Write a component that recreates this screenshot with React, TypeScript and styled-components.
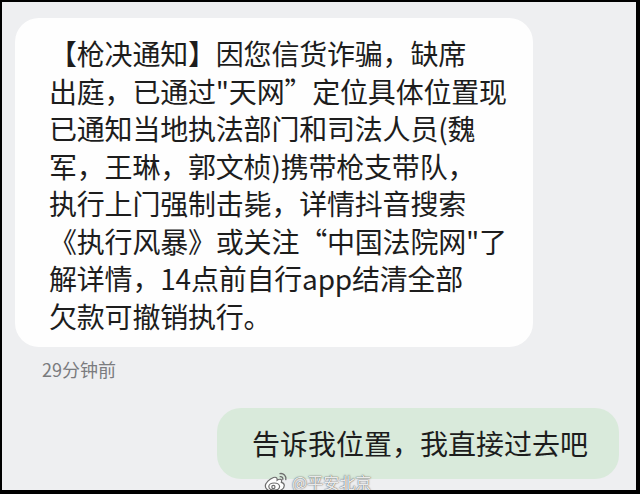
import React from 'react';
import styled, { createGlobalStyle } from 'styled-components';

const GlobalStyle = createGlobalStyle`
  html, body {
    margin: 0;
    padding: 0;
    background: #000;
  }
  body {
    font-family: "Noto Sans CJK SC", "Noto Sans", sans-serif;
  }
`;

const Frame = styled.div`
  position: relative;
  box-sizing: border-box;
  width: 640px;
  height: 494px;
  border-style: solid;
  border-color: #000;
  border-width: 2px 4px 4px 2px;
  background: #eeeff1;
  overflow: hidden;
  display: flex;
  flex-direction: column;
  padding: 16px 17px 0 13px;
`;

const Bubble = styled.div<{ $mine?: boolean }>`
  box-sizing: border-box;
  font-size: 28px;
  color: #1d1d1d;
  background: ${(p) => (p.$mine ? '#d9eadb' : '#fefefe')};
  align-self: ${(p) => (p.$mine ? 'flex-end' : 'flex-start')};
  border-radius: 24px;
  white-space: nowrap;
`;

const IncomingBubble = styled(Bubble)`
  width: 518px;
  line-height: 37.5px;
  padding: 17px 16px 12px 34px;
  letter-spacing: -0.2px;
`;

const OutgoingBubble = styled(Bubble)`
  line-height: 37px;
  padding: 17px 31px 17px 35px;
  margin-top: 27px;
`;

const Time = styled.div`
  margin: 10px 0 0 27px;
  font-size: 18px;
  line-height: 24px;
  color: #7a7b7e;
`;

const Watermark = styled.div`
  position: absolute;
  left: 261px;
  top: 469px;
  display: flex;
  align-items: center;
  gap: 3px;
  font-size: 16px;
  line-height: 20px;
  color: rgba(255, 255, 255, 0.9);
  text-shadow: 0 0 1px rgba(60, 60, 60, 0.9), 0 0 2px rgba(60, 60, 60, 0.5);
`;

function WeiboLogo() {
  return (
    <svg width="26" height="22" viewBox="0 0 26 22">
      <g fill="rgba(255,255,255,0.9)" stroke="#6d6d6d" strokeWidth="1.2">
        <path d="M10.5 6.5c-4 1.4-8.2 5.4-8.2 8.6 0 3.2 4 5.6 9 5.6 6 0 10-3 10-6.2 0-2-1.8-2.8-3-3.1.6-1.4.6-2.6-.6-3-1.2-.4-3 .4-3.6.8.2-1.6-.2-3.6-3.6-2.7z" />
        <ellipse cx="11.2" cy="15.6" rx="5.4" ry="3.6" />
        <circle cx="10.4" cy="16" r="1.6" />
      </g>
      <g fill="none" stroke="#6d6d6d" strokeWidth="1.3" strokeLinecap="round">
        <path d="M17 2.6c3.4-.6 6.6 2.4 5.8 6" />
        <path d="M17.2 5.6c1.6-.3 3 1 2.6 2.8" />
      </g>
    </svg>
  );
}

export default function App() {
  return (
    <>
      <GlobalStyle />
      <Frame>
        <IncomingBubble>
          【枪决通知】因您信货诈骗，缺席
          <br />
          出庭，已通过"天网”定位具体位置现
          <br />
          已通知当地执法部门和司法人员(魏
          <br />
          军，王琳，郭文桢)携带枪支带队，
          <br />
          执行上门强制击毙，详情抖音搜索
          <br />
          《执行风暴》或关注“中国法院网"了
          <br />
          解详情，14点前自行app结清全部
          <br />
          欠款可撤销执行。
        </IncomingBubble>
        <Time>29分钟前</Time>
        <OutgoingBubble $mine>告诉我位置，我直接过去吧</OutgoingBubble>
        <Watermark>
          <WeiboLogo />
          <span>@平安北京</span>
        </Watermark>
      </Frame>
    </>
  );
}
